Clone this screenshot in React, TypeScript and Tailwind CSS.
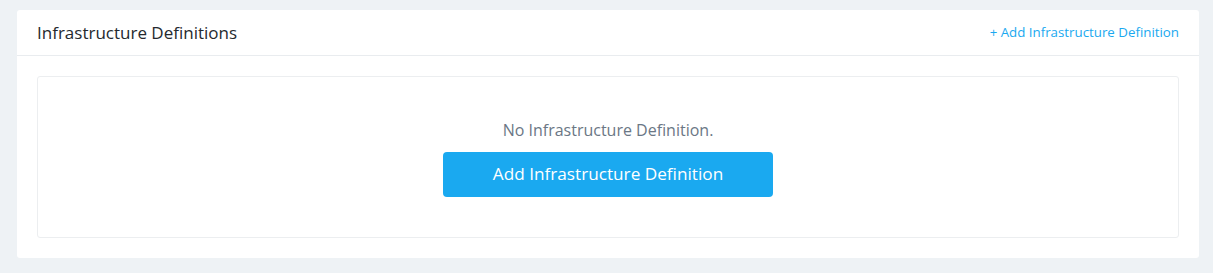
import React from 'react';

const App: React.FC = () => {
  return (
    <div
      className="min-h-[273px] w-full bg-[#eef2f5] pl-[17px] pr-[14px] pt-[10px] pb-[15px]"
      style={{ fontFamily: '"Open Sans", Lato, sans-serif' }}
    >
      <div className="rounded-[3px] bg-white">
        {/* Header */}
        <div className="flex h-[46px] items-center justify-between border-b border-[#e9ecef] px-[20px]">
          <span className="text-[17px] text-[#25292e]">Infrastructure Definitions</span>
          <button className="text-[13.3px] text-[#1aa9f0]">+ Add Infrastructure Definition</button>
        </div>

        {/* Body */}
        <div className="p-[20px]">
          <div className="flex h-[162px] flex-col items-center justify-center rounded-[3px] border border-[#eceef0]">
            <p className="mt-[1px] text-[16px] leading-[22px] text-[#6b7785]">No Infrastructure Definition.</p>
            <button className="mt-[11px] h-[45px] w-[330px] rounded-[4px] bg-[#1aa9f0] text-[17.2px] text-white">
              Add Infrastructure Definition
            </button>
          </div>
        </div>
      </div>
    </div>
  );
};

export default App;
